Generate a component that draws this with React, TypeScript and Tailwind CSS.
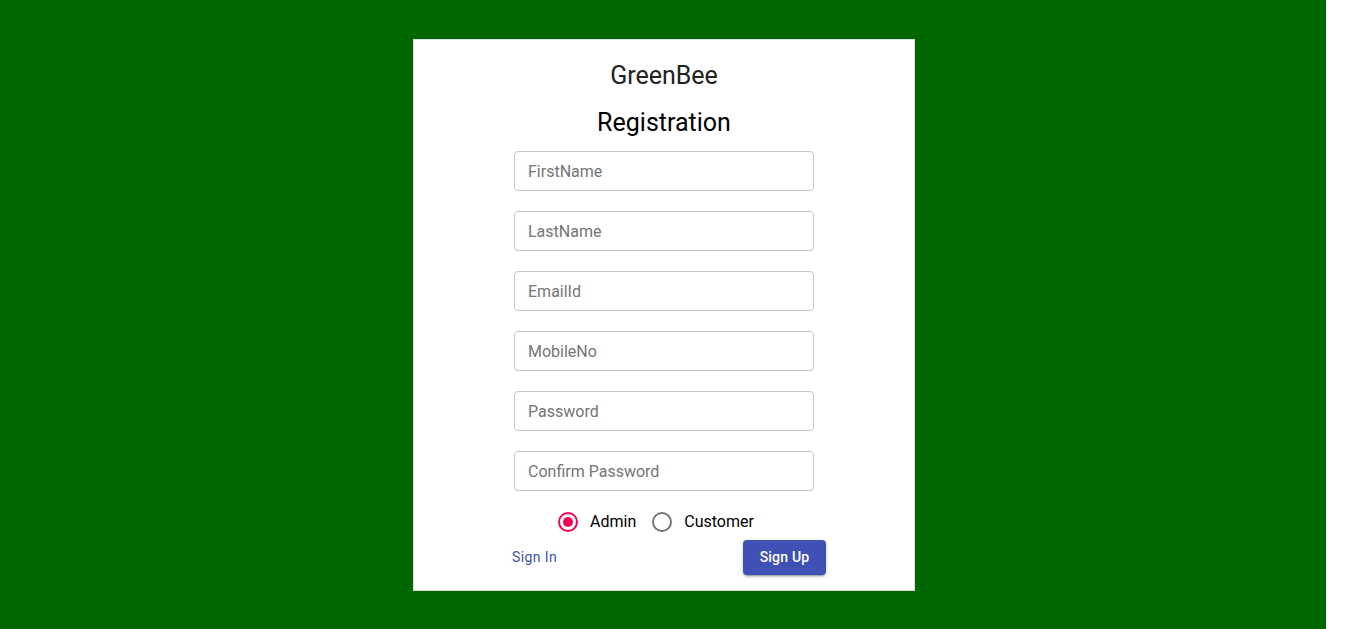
import { useState } from 'react';

const fields = ['FirstName', 'LastName', 'EmailId', 'MobileNo', 'Password', 'Confirm Password'];

export default function App() {
    const [role, setRole] = useState('admin');

    return (
        <div className="w-[1326px] h-[629px] bg-[#006600] pt-[39px]" style={{ fontFamily: 'Roboto, "Liberation Sans", sans-serif' }}>
            <div className="ml-[413px] w-[502px] h-[552px] bg-white border border-[#e0e0e0] flex flex-col items-center">
                {/* Header */}
                <h1 className="mt-[21px] text-[25px] leading-[30px] text-[#222]">GreenBee</h1>
                <h2 className="mt-[17px] text-[25px] leading-[30px] text-black">Registration</h2>

                {/* Fields */}
                <div className="mt-[13px] flex flex-col gap-[20px]">
                    {fields.map((f) => (
                        <input
                            key={f}
                            placeholder={f}
                            type={f.includes('Password') ? 'password' : 'text'}
                            className="w-[300px] h-[40px] px-[13px] rounded-[4px] border border-[#c4c4c4] text-[16px] text-[#222] placeholder:text-[#757575] outline-none"
                        />
                    ))}
                </div>

                {/* Role */}
                <div className="mt-[19px] mr-[16px] flex items-center text-[16px] text-black">
                    <label className="flex items-center cursor-pointer" onClick={() => setRole('admin')}>
                        <span className={`w-[20px] h-[20px] rounded-full border-2 flex items-center justify-center ${role === 'admin' ? 'border-[#f50057]' : 'border-[#757575]'}`}>
                            {role === 'admin' && <span className="w-[10px] h-[10px] rounded-full bg-[#f50057]" />}
                        </span>
                        <span className="ml-[12px]">Admin</span>
                    </label>
                    <label className="ml-[16px] flex items-center cursor-pointer" onClick={() => setRole('customer')}>
                        <span className={`w-[20px] h-[20px] rounded-full border-2 flex items-center justify-center ${role === 'customer' ? 'border-[#f50057]' : 'border-[#757575]'}`}>
                            {role === 'customer' && <span className="w-[10px] h-[10px] rounded-full bg-[#f50057]" />}
                        </span>
                        <span className="ml-[12px]">Customer</span>
                    </label>
                </div>

                {/* Actions */}
                <div className="mt-[6px] w-[322px] ml-[2px] flex items-center justify-between">
                    <button className="px-[8px] h-[35px] text-[14px] tracking-[0.4px] text-[#3f51b5] rounded">Sign In</button>
                    <button className="w-[83px] h-[35px] rounded-[4px] bg-[#3f51b5] text-white text-[14px] tracking-[0.2px] font-medium shadow-[0_3px_1px_-2px_rgba(0,0,0,0.2),0_2px_2px_0_rgba(0,0,0,0.14),0_1px_5px_0_rgba(0,0,0,0.12)]">
                        Sign Up
                    </button>
                </div>
            </div>
        </div>
    );
}
